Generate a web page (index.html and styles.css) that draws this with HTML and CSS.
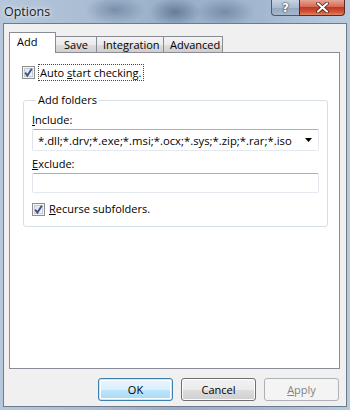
FILE: index.html
```html
<!DOCTYPE html>
<html>
<head>
<meta charset="utf-8">
<link rel="stylesheet" href="styles.css">
</head>
<body>
<div class="window">
  <div class="titlebar">
    <span class="title">Options</span>
    <div class="caption">
      <div class="cbtn help"><span>?</span></div>
      <div class="cbtn close">
        <svg width="13" height="11" viewBox="0 0 13 11"><path d="M2 1.5 L11 9.5 M11 1.5 L2 9.5" stroke="#3a1a14" stroke-width="3.6" stroke-linecap="round"/><path d="M2 1.5 L11 9.5 M11 1.5 L2 9.5" stroke="#ffffff" stroke-width="2.2" stroke-linecap="round"/></svg>
      </div>
    </div>
  </div>
  <div class="client">
    <div class="tabs">
      <div class="tab active">Add</div>
      <div class="tab t-save">Save</div>
      <div class="tab t-int">Integration</div>
      <div class="tab t-adv">Advanced</div>
    </div>
    <div class="panel">
      <div class="check first">
        <span class="box"><svg width="13" height="13" viewBox="0 0 13 13"><path d="M3.2 6.6 L5.4 9.6 L9.8 2.8" fill="none" stroke="#3c4f8c" stroke-width="1.8"/></svg></span>
        <span class="focus">Auto <u>s</u>tart checking.</span>
      </div>
      <fieldset class="group">
        <legend>Add folders</legend>
        <div class="label"><u>I</u>nclude:</div>
        <div class="combo">
          <span class="val">*.dll;*.drv;*.exe;*.msi;*.ocx;*.sys;*.zip;*.rar;*.iso</span>
          <svg class="arrow" width="7" height="4" viewBox="0 0 7 4"><path d="M0 0 H7 L3.5 4 Z" fill="#000"/></svg>
        </div>
        <div class="label lbl2"><u>E</u>xclude:</div>
        <div class="input"></div>
        <div class="check sub">
          <span class="box"><svg width="13" height="13" viewBox="0 0 13 13"><path d="M3.2 6.6 L5.4 9.6 L9.8 2.8" fill="none" stroke="#3c4f8c" stroke-width="1.8"/></svg></span>
          <span class="txt"><u>R</u>ecurse subfolders.</span>
        </div>
      </fieldset>
    </div>
    <div class="buttons">
      <div class="btn default">OK</div>
      <div class="btn">Cancel</div>
      <div class="btn disabled"><u>A</u>pply</div>
    </div>
  </div>
</div>
</body>
</html>
```

FILE: styles.css
```css
* { box-sizing: border-box; }
html, body { margin: 0; padding: 0; }
body {
  width: 350px; height: 410px; overflow: hidden;
  font-family: "Open Sans", "Liberation Sans", sans-serif;
  font-size: 11px; color: #000;
}
.window {
  width: 350px; height: 410px;
  display: flex; flex-direction: column;
  padding: 0 3px 3px 3px;
  background:
    radial-gradient(ellipse 30px 14px at 115px 10px, rgba(70,95,125,0.45), transparent),
    radial-gradient(ellipse 26px 14px at 175px 12px, rgba(60,85,115,0.55), transparent),
    radial-gradient(ellipse 30px 14px at 225px 12px, rgba(70,95,125,0.45), transparent),
    linear-gradient(90deg, #b6c7db 0%, #aabdd3 25%, #97aec8 50%, #a3b8d0 75%, #b9cadd 100%);
}
.titlebar {
  height: 23px; flex: none;
  display: flex; align-items: flex-start;
}
.title {
  font-size: 12.5px; color: #1b1b1b;
  padding: 3px 0 0 1px;
  text-shadow: 0 0 6px #e6eef7, 0 0 3px #e6eef7;
}
.caption { margin-left: auto; margin-right: 2px; display: flex; }
.cbtn {
  height: 16px; border: 1px solid #4c5a6e; border-top: none;
  display: flex; align-items: center; justify-content: center;
}
.help {
  width: 28px; border-radius: 0 0 0 4px; border-right: none;
  background: linear-gradient(#c6d3e1, #a9bbd0 50%, #93a8c0 51%, #a6b8cd);
}
.help span {
  font-family: "DejaVu Sans", sans-serif; font-weight: bold; font-size: 12px; color: #fff;
  text-shadow: 0 0 1px #243040, 0 0 2px #243040;
  line-height: 1;
}
.close {
  width: 46px; border-radius: 0 0 4px 0; border-color: #5a2b24;
  background: linear-gradient(#e8a493, #d56a55 45%, #c4381e 50%, #d0553a 80%, #e18466);
}
.client {
  flex: 1;
  background: #f0f0f0;
  border: 1px solid #6d7b8b;
  padding: 8px 6px 5px 5px;
  display: flex; flex-direction: column;
}
.tabs { display: flex; height: 20px; align-items: flex-end; }
.tab {
  height: 16px; border: 1px solid #898c95; border-bottom: none;
  margin-left: -1px; padding: 0 6px;
  background: linear-gradient(#f3f3f3, #ebebeb 50%, #dddddd 51%, #cfcfcf);
  line-height: 15px; text-align: center;
}
.tab.active {
  height: 21px; margin-left: 0; margin-bottom: -1px;
  background: #fff; position: relative; z-index: 1;
  width: 47px; text-align: left; padding-left: 7px; line-height: 18px;
}
.t-save { width: 42px; }
.t-int { width: 68px; }
.t-adv { width: 60px; }
.panel {
  height: 317px; flex: none;
  background: #fff; border: 1px solid #898c95;
  padding: 11px 11px 0 12px;
}
.check { display: flex; align-items: center; }
.box {
  width: 13px; height: 13px; flex: none;
  border: 1px solid #8e8f8f;
  background: linear-gradient(135deg, #dcdcdc, #fbfbfb);
  box-shadow: inset 0 0 0 1px #f4f4f4, inset 0 0 0 2px #c5cbd3;
  position: relative;
}
.box svg { position: absolute; left: -1px; top: -1px; }
.focus {
  margin-left: 3px; height: 17px; padding: 0 2px 0 1px;
  border: 1px dotted #444; line-height: 15px;
}
.group {
  margin: 12px 0 0 1px; padding: 1px 8px 10px 8px;
  border: 1px solid #d5dfe5; border-radius: 3px;
  min-width: 0;
}
.group legend { padding: 0 2px; margin-left: 4px; line-height: 14px; }
.label { line-height: 14px; margin-top: 5px; }
.lbl2 { margin-top: 6px; }
.combo {
  margin-top: 2px; height: 22px;
  border: 1px solid #abadb3; border-color: #abadb3 #e3e9ef #e3e9ef #e2e3ea;
  border-radius: 2px; display: flex; align-items: center;
  padding: 0 6px 0 5px; font-size: 11.3px;
}
.val { flex: 1; white-space: nowrap; overflow: hidden; }
.arrow { flex: none; }
.input {
  margin-top: 2px; height: 20px;
  border: 1px solid #abadb3; border-color: #abadb3 #e3e9ef #e3e9ef #e2e3ea;
  border-radius: 2px;
}
.sub { margin-top: 9px; }
.sub .txt { margin-left: 4px; line-height: 14px; }
.buttons {
  margin-top: 9px; display: flex; justify-content: flex-end; gap: 8px;
  padding-right: 1px;
}
.btn {
  width: 75px; height: 23px;
  border: 1px solid #707070; border-radius: 3px;
  background: linear-gradient(#f2f2f2, #ebebeb 50%, #dddddd 51%, #cfcfcf);
  box-shadow: inset 0 0 0 1px #fcfcfc;
  display: flex; align-items: center; justify-content: center;
}
.btn.default {
  border-color: #3c7fb1;
  box-shadow: inset 0 0 0 1px #48d7fb66, inset 0 0 0 2px #fff;
  background: linear-gradient(#eaf6fd, #d9f0fc 50%, #bee6fd 51%, #a7d9f5);
}
.btn.disabled {
  border-color: #adb2b5; background: #f4f4f4; color: #838383;
  box-shadow: none;
}
u { text-decoration-thickness: 1px; text-underline-offset: 1px; }
```
